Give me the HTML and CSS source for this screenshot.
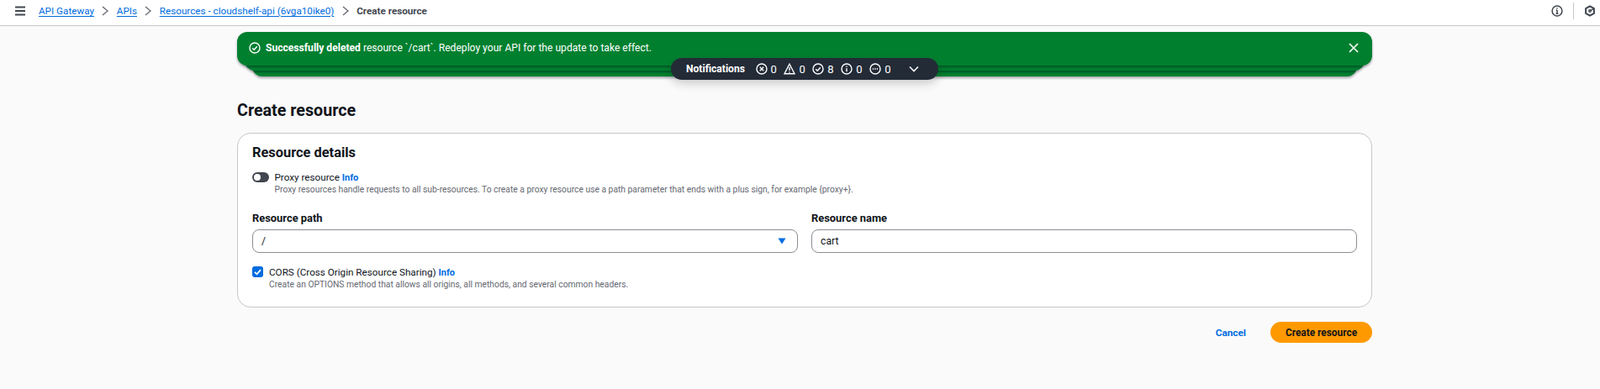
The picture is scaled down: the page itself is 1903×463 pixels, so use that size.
FILE: index.html
```
<!DOCTYPE html>
<html lang="en">
<head>
<meta charset="utf-8">
<title>Create resource</title>
<link rel="stylesheet" href="styles.css">
</head>
<body>
<header class="topbar">
  <svg class="menu" width="14" height="12" viewBox="0 0 14 12"><path d="M1 1.5h12M1 6h12M1 10.5h12" stroke="#424650" stroke-width="1.8" fill="none"/></svg>
  <nav class="crumbs">
    <a href="#">API Gateway</a>
    <svg class="sep" width="10" height="12" viewBox="0 0 10 12"><path d="M2 1l6 5-6 5" stroke="#656871" stroke-width="1.3" fill="none"/></svg>
    <a href="#">APIs</a>
    <svg class="sep" width="10" height="12" viewBox="0 0 10 12"><path d="M2 1l6 5-6 5" stroke="#656871" stroke-width="1.3" fill="none"/></svg>
    <a href="#">Resources - cloudshelf-api (6vga10ike0)</a>
    <svg class="sep" width="10" height="12" viewBox="0 0 10 12"><path d="M2 1l6 5-6 5" stroke="#656871" stroke-width="1.3" fill="none"/></svg>
    <span class="current">Create resource</span>
  </nav>
  <div class="tools">
    <svg width="14" height="14" viewBox="0 0 14 14" fill="none" stroke="#424650" stroke-width="1.5"><circle cx="7" cy="7" r="5.9"/><path d="M7 6v4.2M5.6 10.2h2.8M5.8 6h1.2"/><path d="M7 3.2v1.4"/></svg>
    <span class="divider"></span>
    <svg width="14" height="14" viewBox="0 0 14 14" fill="none" stroke="#424650" stroke-width="2"><path d="M7 1.4l4.9 2.8v5.6L7 12.6 2.1 9.8V4.2z"/><circle cx="7" cy="7" r="1.2" stroke-width="1.4"/><path d="M8 6.4l3.5-2" stroke-width="1.5"/></svg>
  </div>
</header>

<main class="page">
  <section class="flash-stack">
    <div class="flash-layer layer-3"></div>
    <div class="flash-layer layer-2"></div>
    <div class="flash">
      <svg class="flash-icon" width="14" height="14" viewBox="0 0 14 14" fill="none" stroke="#fff" stroke-width="1.4"><circle cx="7" cy="7" r="6"/><path d="M4.2 7.2l2 2 3.6-4"/></svg>
      <p class="flash-text"><b>Successfully deleted</b> resource `/cart`. Redeploy your API for the update to take effect.</p>
      <svg class="flash-close" width="14" height="14" viewBox="0 0 14 14" fill="none" stroke="#fff" stroke-width="1.6"><path d="M2 2l10 10M12 2L2 12"/></svg>
    </div>
    <div class="notify">
      <b class="notify-title">Notifications</b>
      <span class="count"><svg width="14" height="14" viewBox="0 0 14 14" fill="none" stroke="#fff" stroke-width="1.4"><circle cx="7" cy="7" r="6"/><path d="M4.8 4.8l4.4 4.4M9.2 4.8l-4.4 4.4"/></svg>0</span>
      <span class="count"><svg width="14" height="14" viewBox="0 0 14 14" fill="none" stroke="#fff" stroke-width="1.4"><path d="M7 1.2L13 12.8H1z"/><path d="M7 5v4M7 10.2v1.2"/></svg>0</span>
      <span class="count"><svg width="14" height="14" viewBox="0 0 14 14" fill="none" stroke="#fff" stroke-width="1.4"><circle cx="7" cy="7" r="6"/><path d="M4.2 7.2l2 2 3.6-4"/></svg>8</span>
      <span class="count"><svg width="14" height="14" viewBox="0 0 14 14" fill="none" stroke="#fff" stroke-width="1.4"><circle cx="7" cy="7" r="6"/><path d="M7 6.2v4M7 3.4v1.4"/></svg>0</span>
      <span class="count"><svg width="14" height="14" viewBox="0 0 14 14" fill="none" stroke="#fff" stroke-width="1.4"><circle cx="7" cy="7" r="6"/><path d="M3.8 7h1.4M6.3 7h1.4M8.8 7h1.4"/></svg>0</span>
      <svg class="notify-chevron" width="14" height="14" viewBox="0 0 14 14" fill="none" stroke="#fff" stroke-width="1.6"><path d="M2 4.5L7 9.5l5-5"/></svg>
    </div>
  </section>

  <h1 class="title">Create resource</h1>

  <form class="card">
    <h2 class="card-title">Resource details</h2>
    <div class="option toggle-row">
      <span class="toggle"><span class="knob"></span></span>
      <div>
        <div class="option-label">Proxy resource <a class="info" href="#">Info</a></div>
        <div class="hint">Proxy resources handle requests to all sub-resources. To create a proxy resource use a path parameter that ends with a plus sign, for example {proxy+}.</div>
      </div>
    </div>
    <div class="fields">
      <div class="field">
        <label class="field-label">Resource path</label>
        <div class="input select"><span>/</span><svg width="10" height="8" viewBox="0 0 10 8"><path d="M0.5 0.5h9L5 7.5z" fill="#006ce0"/></svg></div>
      </div>
      <div class="field">
        <label class="field-label">Resource name</label>
        <div class="input"><span>cart</span></div>
      </div>
    </div>
    <div class="option cors-row">
      <span class="check"><svg width="13" height="13" viewBox="0 0 13 13" fill="none" stroke="#fff" stroke-width="1.8"><path d="M3 6.8l2.5 2.5 4.5-5.2"/></svg></span>
      <div>
        <div class="option-label">CORS (Cross Origin Resource Sharing) <a class="info" href="#">Info</a></div>
        <div class="hint">Create an OPTIONS method that allows all origins, all methods, and several common headers.</div>
      </div>
    </div>
  </form>

  <div class="actions">
    <a class="cancel" href="#">Cancel</a>
    <button class="primary" type="button">Create resource</button>
  </div>
</main>
</body>
</html>
```

FILE: styles.css
```
* { box-sizing: border-box; }
html, body { margin: 0; height: 100%; }
body {
  background: #fafafa;
  color: #0f141a;
  font-family: Roboto, "Noto Sans", sans-serif;
  font-size: 12.1px;
  overflow: hidden;
}
a { color: #006ce0; }

.topbar {
  height: 31px;
  background: #fff;
  border-bottom: 1px solid #c6c6cd;
  display: flex;
  align-items: center;
  padding: 0 5px 4px 17px;
}
.menu { flex: none; }
.crumbs {
  display: flex;
  align-items: center;
  margin-left: 15px;
  font-size: 11.7px;
}
.crumbs a { text-decoration: underline; text-underline-offset: 2px; white-space: nowrap; }
.sep { margin: 0 8.4px; flex: none; }
.current { color: #424650; font-weight: 700; }
.tools { margin-left: auto; display: flex; align-items: center; gap: 12px; }
.divider { width: 1px; height: 20px; background: #c6c6cd; }

.page { padding: 7px 271px 0 282px; }

.flash-stack { position: relative; height: 52px; }
.flash {
  position: relative;
  height: 40px;
  background: #00802f;
  border-radius: 12px;
  color: #fff;
  display: flex;
  align-items: center;
  padding: 0 15px 2px 14px;
  box-shadow: 0 2px 3px rgba(0, 7, 22, .35);
}
.flash-text { margin: 0 0 0 6px; font-size: 12.1px; flex: 1; }
.flash-close { flex: none; }
.flash-layer {
  position: absolute;
  background: #00802f;
  border-radius: 12px;
  box-shadow: 0 2px 3px rgba(0, 7, 22, .35);
}
.layer-2 { left: 9px; right: 9px; top: 10px; height: 36px; }
.layer-3 { left: 18px; right: 18px; top: 16px; height: 37px; }

.notify {
  position: absolute;
  left: 516px;
  top: 31px;
  width: 318px;
  height: 26px;
  background: #232b37;
  border-radius: 13px;
  color: #fff;
  display: flex;
  align-items: center;
  padding: 0 22px 0 18px;
  gap: 8.6px;
  box-shadow: 0 4px 12px rgba(0, 7, 22, .2);
}
.notify-title { font-size: 12.1px; margin-right: 4px; }
.count { display: flex; align-items: center; gap: 4px; font-size: 13px; }
.notify-chevron { margin-left: auto; }

.title { margin: 29px 0 0; font-size: 19.7px; line-height: 26px; font-weight: 700; }

.card {
  margin-top: 13px;
  height: 208px;
  background: #fff;
  border: 1px solid #c6c6cd;
  border-radius: 16px;
  padding: 12px 17px 0;
}
.card-title { margin: 0; font-size: 16.4px; line-height: 22px; font-weight: 700; }
.option { display: flex; align-items: flex-start; }
.toggle-row { margin-top: 10px; gap: 6.5px; }
.cors-row { margin-top: 15px; gap: 7px; }
.option-label { font-size: 11.7px; line-height: 16px; color: #0f141a; }
.info { font-size: 11px; font-weight: 700; text-decoration: none; }
.hint { font-size: 10.3px; line-height: 14px; color: #656871; margin-top: -1px; }
.toggle {
  margin-top: 2px;
  width: 20px;
  height: 12px;
  border-radius: 6px;
  background: #424650;
  padding: 2px;
  display: block;
  flex: none;
}
.knob { display: block; width: 8px; height: 8px; border-radius: 50%; background: #fff; }
.check {
  margin-top: 1px;
  width: 13px;
  height: 13px;
  border-radius: 3px;
  background: #006ce0;
  display: block;
  flex: none;
}
.check svg { display: block; }
.fields {
  margin-top: 19px;
  display: grid;
  grid-template-columns: 1fr 1fr;
  gap: 16px;
}
.field-label { display: block; font-size: 12.9px; line-height: 16px; font-weight: 700; }
.input {
  margin-top: 5px;
  height: 28px;
  border: 1px solid #8c8c94;
  border-radius: 8px;
  background: #fff;
  padding: 0 10px;
  display: flex;
  align-items: center;
  justify-content: space-between;
  font-size: 12.2px;
}
.select { padding-right: 13px; }

.actions {
  margin-top: 17px;
  display: flex;
  justify-content: flex-end;
  align-items: center;
  gap: 29px;
}
.cancel { font-size: 11.8px; font-weight: 700; text-decoration: none; }
.primary {
  width: 121px;
  height: 25px;
  border: 0;
  border-radius: 13px;
  background: #ff9900;
  color: #0f141a;
  font: 700 11.9px Roboto, "Noto Sans", sans-serif;
}
```
